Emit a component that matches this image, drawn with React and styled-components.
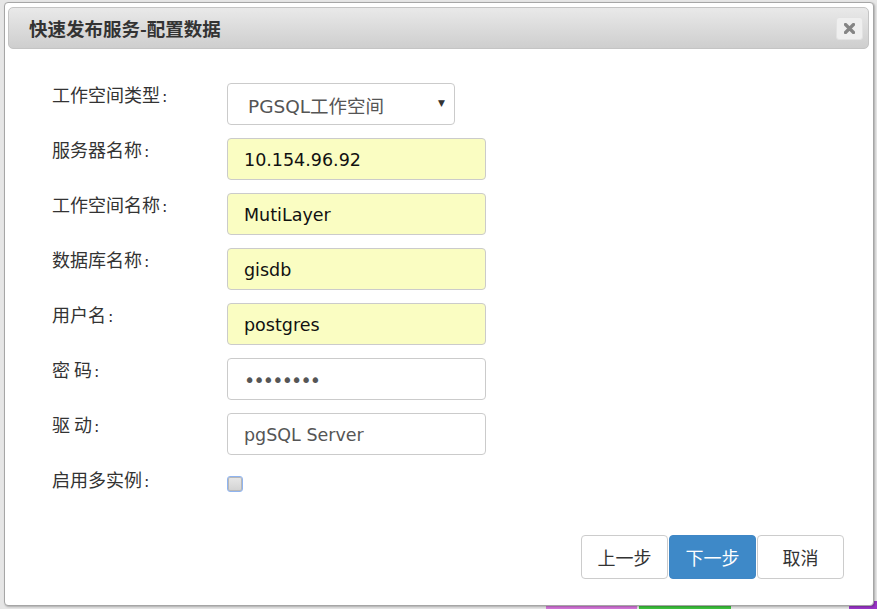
import styled, { createGlobalStyle } from "styled-components"

const GlobalStyle = createGlobalStyle`
    html, body {
        margin: 0;
        padding: 0;
        background: #e6e6e6;
    }
    body {
        font-family: "DejaVu Sans", "Noto Sans CJK SC", sans-serif;
    }
`

const Page = styled.div`
    position: relative;
    width: 877px;
    height: 609px;
    overflow: hidden;
    background: #e6e6e6;
`

const Chip = styled.div`
    position: absolute;
    bottom: 0;
    left: ${props => props.left}px;
    width: ${props => props.w}px;
    height: 8px;
    background: ${props => props.color};
    border-radius: ${props => props.round ? "6px 0 0 0" : "0"};
`

const Dialog = styled.div`
    position: relative;
    z-index: 1;
    margin: 2px 0 0 4px;
    width: 870px;
    height: 604px;
    box-sizing: border-box;
    background: #fff;
    border: 1px solid #a6a6a6;
    border-radius: 4px;
    box-shadow: 1px 1px 2px rgba(0, 0, 0, 0.25);
    padding: 4px 4px 0 3px;
    display: flex;
    flex-direction: column;
`

const TitleBar = styled.div`
    height: 42px;
    box-sizing: border-box;
    border: 1px solid #c4c4c4;
    border-radius: 5px;
    background: linear-gradient(#e9e9e9, #cecece);
    display: flex;
    align-items: center;
    justify-content: space-between;
    padding: 0 5px 0 20px;
`

const Title = styled.span`
    font-family: "Noto Sans CJK SC", sans-serif;
    font-weight: 700;
    font-size: 18.5px;
    color: #333;
`

const CloseButton = styled.button`
    width: 27px;
    height: 23px;
    border: 1px solid #e2e2e2;
    border-radius: 3px;
    background: #efefef;
    display: flex;
    align-items: center;
    justify-content: center;
    padding: 0;
    margin-top: 1px;
`

const Form = styled.div`
    display: grid;
    grid-template-columns: 175px 259px;
    row-gap: 13px;
    padding: 34px 0 0 44px;
`

const Label = styled.div`
    font-family: "Noto Sans CJK SC", sans-serif;
    font-size: 18px;
    line-height: 22px;
    color: #333;
`

const Colon = styled.span`
    font-family: "DejaVu Sans", sans-serif;
    font-size: 16px;
    margin-left: 2px;
`

const Field = styled.div`
    height: 42px;
    box-sizing: border-box;
    border: 1px solid #cbcbcb;
    border-radius: 4px;
    background: ${props => props.filled ? "#fafdc2" : "#fff"};
    color: ${props => props.filled ? "#111" : "#555"};
    font-size: 17.5px;
    display: flex;
    align-items: center;
    padding: 2px 0 0 16px;
    width: ${props => props.w || 259}px;
`

const SelectText = styled.span`
    flex: 1;
    padding-left: 4px;
    font-family: "DejaVu Sans", "Noto Sans CJK SC", sans-serif;
    font-size: 18.5px;
`

const Arrow = styled.span`
    font-size: 9px;
    color: #333;
    margin-right: 9px;
    margin-bottom: 4px;
`

const Dots = styled.span`
    font-size: 19px;
    letter-spacing: -1.8px;
    color: #555;
`

const CheckCell = styled.div`
    height: 30px;
    display: flex;
    align-items: center;
`

const CheckBox = styled.span`
    width: 16px;
    height: 16px;
    box-sizing: border-box;
    border: 1px solid #8fb4f0;
    border-radius: 3px;
    background: linear-gradient(#e8e8e8, #d2d2d2);
    box-shadow: inset 0 0 0 1px #b8b8b8;
    margin-top: 1px;
`

const Footer = styled.div`
    margin-top: auto;
    display: flex;
    justify-content: flex-end;
    padding: 0 25px 26px 0;
`

const Button = styled.button`
    width: ${props => props.w || 87}px;
    height: 44px;
    box-sizing: border-box;
    margin-left: 1px;
    border: 1px solid ${props => props.primary ? "#3f87c6" : "#cccccc"};
    border-radius: 4px;
    background: ${props => props.primary ? "#3e89c8" : "#fff"};
    color: ${props => props.primary ? "#fff" : "#333"};
    font-family: "Noto Sans CJK SC", sans-serif;
    font-size: 18px;
    padding: 0;
`

const fields = [
    { label: "服务器名称", value: "10.154.96.92", filled: true },
    { label: "工作空间名称", value: "MutiLayer", filled: true },
    { label: "数据库名称", value: "gisdb", filled: true },
    { label: "用户名", value: "postgres", filled: true },
    { label: "密 码", value: "••••••••", password: true },
    { label: "驱 动", value: "pgSQL Server" },
]

const App = () => {
    return (
        <Page>
            <GlobalStyle />
            <Chip left={546} w={91} color="#d374d8" />
            <Chip left={639} w={92} color="#3cc23c" />
            <Chip left={849} w={28} color="#9a35c8" round />
            <Dialog>
                <TitleBar>
                    <Title>快速发布服务-配置数据</Title>
                    <CloseButton>
                        <svg width="11" height="11" viewBox="0 0 11 11">
                            <path d="M1.5 1.5 L9.5 9.5 M9.5 1.5 L1.5 9.5" stroke="#858585" strokeWidth="3.2" strokeLinecap="round" />
                        </svg>
                    </CloseButton>
                </TitleBar>
                <Form>
                    <Label>工作空间类型<Colon>:</Colon></Label>
                    <Field w={228}>
                        <SelectText>PGSQL工作空间</SelectText>
                        <Arrow>▼</Arrow>
                    </Field>
                    {fields.map(f => (
                        <>
                            <Label key={f.label}>{f.label}<Colon>:</Colon></Label>
                            <Field filled={f.filled}>
                                {f.password ? <Dots>{f.value}</Dots> : f.value}
                            </Field>
                        </>
                    ))}
                    <Label>启用多实例<Colon>:</Colon></Label>
                    <CheckCell><CheckBox /></CheckCell>
                </Form>
                <Footer>
                    <Button>上一步</Button>
                    <Button primary>下一步</Button>
                    <Button>取消</Button>
                </Footer>
            </Dialog>
        </Page>
    )
}

export default App
